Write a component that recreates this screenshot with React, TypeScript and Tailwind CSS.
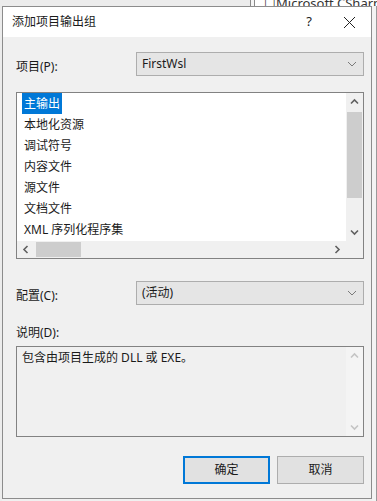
import React from 'react';

const font = { fontFamily: '"Noto Sans", "Noto Sans CJK SC", sans-serif' };

type ArrowProps = { dir: 'up' | 'down' | 'left' | 'right'; color?: string };

const Arrow = ({ dir, color = '#606060' }: ArrowProps) => {
  const pts = {
    up: '1,5.5 4.5,2 8,5.5',
    down: '1,2.5 4.5,6 8,2.5',
    left: '5.5,1 2,4.5 5.5,8',
    right: '2.5,1 6,4.5 2.5,8',
  }[dir];
  return (
    <svg width="9" height="9" viewBox="0 0 9 9">
      <polyline points={pts} fill="none" stroke={color} strokeWidth="1.6" />
    </svg>
  );
};

const Combo = ({ value }: { value: string }) => (
  <div className="flex h-[24px] w-[228px] items-center justify-between border border-[#adadad] bg-[#e5e5e5] pl-[5px] pr-[6px] text-[12px] text-[#1a1a1a]">
    <span className="leading-none">{value}</span>
    <svg width="10" height="6" viewBox="0 0 10 6">
      <polyline points="1,1 5,5 9,1" fill="none" stroke="#7a7a7a" strokeWidth="1" />
    </svg>
  </div>
);

const items = ['主输出', '本地化资源', '调试符号', '内容文件', '源文件', '文档文件', 'XML 序列化程序集'];

export default function App() {
  return (
    <div className="flex h-[501px] w-[377px] flex-col overflow-hidden bg-[#f0f0f0] text-[#1a1a1a]" style={font}>
      {/* window behind */}
      <div className="flex h-[6px] shrink-0">
        <div className="w-[250px] bg-[#ececec]" />
        <div className="w-[5px] border-x border-[#8a8a8a] bg-[#f5f5f5]" />
        <div className="flex-1 overflow-hidden whitespace-nowrap bg-white pl-[9px]">
          <div className="text-[13px] leading-[6px] text-[#333]">☐Microsoft CSharp</div>
        </div>
      </div>

      <div className="flex flex-1">
        <div className="w-[2px] bg-[#ececec]" />
        <div className="flex h-[493px] w-[370px] flex-col border border-[#8c8c8c] bg-[#f0f0f0]">
          {/* title bar */}
          <div className="flex h-[30px] items-center bg-white pl-[9px] text-[12px]">
            <span className="flex-1">添加项目输出组</span>
            <span className="w-[16px] text-center text-[13px] text-[#222]">?</span>
            <span className="flex w-[54px] justify-center pl-[10px]">
              <svg width="13" height="13" viewBox="0 0 13 13">
                <path d="M1 1L12 12M12 1L1 12" stroke="#222" strokeWidth="1" />
              </svg>
            </span>
          </div>

          {/* body */}
          <div className="flex flex-1 flex-col pl-[13px] pr-[7px] text-[12px]">
            <div className="mt-[15px] flex items-center justify-between">
              <span className="mt-[6px]">项目(P):</span>
              <Combo value="FirstWsl" />
            </div>

            {/* list box */}
            <div className="mt-[16px] flex h-[167px] flex-col border border-[#828282] bg-white">
              <div className="flex flex-1">
                <div className="flex-1 pl-[5px]">
                  {items.map((it, i) => (
                    <div key={it} className="h-[21px] leading-[21px]">
                      <span className={i === 0 ? 'inline-block bg-[#0078d7] px-[2px] text-white' : 'px-[2px]'}>{it}</span>
                    </div>
                  ))}
                </div>
                <div className="flex w-[17px] flex-col bg-[#f0f0f0]">
                  <div className="flex h-[18px] items-center justify-center">
                    <Arrow dir="up" />
                  </div>
                  <div className="flex-1 px-[1px] pt-[1px]">
                    <div className="h-[86px] bg-[#cdcdcd]" />
                  </div>
                  <div className="flex h-[18px] items-center justify-center">
                    <Arrow dir="down" />
                  </div>
                </div>
              </div>
              <div className="flex h-[17px]">
                <div className="flex flex-1 bg-[#f0f0f0]">
                  <div className="flex w-[18px] items-center justify-center">
                    <Arrow dir="left" />
                  </div>
                  <div className="flex-1 py-[1px] pl-[1px]">
                    <div className="h-full w-[45px] bg-[#cdcdcd]" />
                  </div>
                  <div className="flex w-[18px] items-center justify-center">
                    <Arrow dir="right" />
                  </div>
                </div>
                <div className="w-[17px] bg-[#f0f0f0]" />
              </div>
            </div>

            <div className="mt-[22px] flex items-center justify-between">
              <span className="mt-[6px]">配置(C):</span>
              <Combo value="(活动)" />
            </div>

            <div className="mt-[20px] leading-[16px]">说明(D):</div>

            {/* description */}
            <div className="mt-[5px] flex h-[91px] border border-[#828282] bg-[#f0f0f0]">
              <div className="flex-1 pl-[5px] pt-[2px] leading-[18px]">包含由项目生成的 DLL 或 EXE。</div>
              <div className="flex w-[17px] flex-col justify-between bg-[#f4f4f4]">
                <div className="flex h-[18px] items-center justify-center">
                  <Arrow dir="up" color="#c4c4c4" />
                </div>
                <div className="flex h-[18px] items-center justify-center">
                  <Arrow dir="down" color="#c4c4c4" />
                </div>
              </div>
            </div>

            <div className="mt-[19px] flex justify-end gap-[7px]">
              <button className="h-[28px] w-[87px] border-2 border-[#0078d7] bg-[#e1e1e1] text-[12px]">确定</button>
              <button className="h-[28px] w-[87px] border border-[#adadad] bg-[#e1e1e1] text-[12px]">取消</button>
            </div>
          </div>
        </div>
        <div className="flex-1 border-r border-[#9a9a9a] bg-[#f3f3f3]" />
      </div>
    </div>
  );
}
